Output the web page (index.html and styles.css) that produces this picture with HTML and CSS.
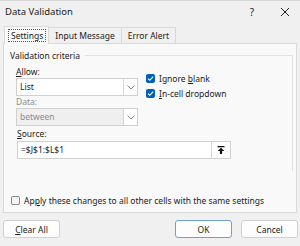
FILE: index.html
```html
<!DOCTYPE html>
<html lang="en">
<head>
    <meta charset="UTF-8">
    <title>Data Validation</title>
    <link rel="stylesheet" href="styles.css">
</head>
<body>

    <div class="dialog">
        <div class="titlebar">
            <span class="title">Data Validation</span>
            <span class="help">?</span>
            <svg class="close" width="10" height="10" viewBox="0 0 10 10">
                <path d="M1 1 L9 9 M9 1 L1 9" stroke="#222" stroke-width="1"/>
            </svg>
        </div>

        <div class="tabs">
            <div class="tab active"><span class="focus">Settings</span></div>
            <div class="tab">Input Message</div>
            <div class="tab">Error Alert</div>
        </div>

        <div class="panel">
            <div class="group">
                <div class="group-title">
                    <span>Validation criteria</span>
                    <span class="line"></span>
                </div>
                <div class="group-body">
                    <div class="row">
                        <div class="col-left">
                            <div class="label"><u>A</u>llow:</div>
                            <div class="select">
                                <span class="value">List</span>
                                <span class="arrow">
                                    <svg width="8" height="5" viewBox="0 0 8 5"><path d="M0.5 0.5 L4 4 L7.5 0.5" fill="none" stroke="#777" stroke-width="0.9"/></svg>
                                </span>
                            </div>
                            <div class="label disabled">Data:</div>
                            <div class="select disabled">
                                <span class="value">between</span>
                                <span class="arrow">
                                    <svg width="8" height="5" viewBox="0 0 8 5"><path d="M0.5 0.5 L4 4 L7.5 0.5" fill="none" stroke="#777" stroke-width="0.9"/></svg>
                                </span>
                            </div>
                        </div>
                        <div class="col-right">
                            <div class="check-row">
                                <span class="checkbox checked"><svg width="9" height="9" viewBox="0 0 9 9"><path d="M2 4.6 L3.8 6.3 L7.2 2.6" fill="none" stroke="#fff" stroke-width="1.1"/></svg></span>
                                <span>Ignore <u>b</u>lank</span>
                            </div>
                            <div class="check-row">
                                <span class="checkbox checked"><svg width="9" height="9" viewBox="0 0 9 9"><path d="M2 4.6 L3.8 6.3 L7.2 2.6" fill="none" stroke="#fff" stroke-width="1.1"/></svg></span>
                                <span><u>I</u>n-cell dropdown</span>
                            </div>
                        </div>
                    </div>

                    <div class="label source-label"><u>S</u>ource:</div>
                    <div class="source">
                        <span class="value">=$J$1:$L$1</span>
                        <span class="pick">
                            <svg width="8" height="8" viewBox="0 0 8 8">
                                <rect x="0.5" y="0" width="7" height="1.3" fill="#111"/>
                                <path d="M4 1.8 L7.4 5 L5.1 5 L5.1 8 L2.9 8 L2.9 5 L0.6 5 Z" fill="#111"/>
                            </svg>
                        </span>
                    </div>
                </div>
            </div>

            <div class="apply">
                <span class="checkbox"></span>
                <span>Ap<u>p</u>ly these changes to all other cells with the same settings</span>
            </div>
        </div>

        <div class="footer">
            <button class="btn"><u>C</u>lear All</button>
            <span class="spacer"></span>
            <button class="btn default">OK</button>
            <button class="btn">Cancel</button>
        </div>
    </div>

</body>
</html>
```

FILE: styles.css
```css
body {
    margin: 0;
    padding: 0;
    background-color: #f0f0f0;
    font-family: 'Noto Sans', 'Open Sans', sans-serif;
    font-size: 8.5px;
    color: #1b1b1b;
}
.dialog {
    width: 300px;
    height: 246px;
    border-top: 1px solid #d6d6d6;
    box-sizing: border-box;
}
.titlebar {
    height: 29px;
    display: flex;
    align-items: center;
    padding: 0 10px 0 5px;
    margin-top: -4px;
    font-size: 9.5px;
}
.title {
    flex: 1;
}
.help {
    margin-right: 26px;
    font-size: 10px;
}
.tabs {
    display: flex;
    margin-left: 4px;
    height: 17px;
    position: relative;
    z-index: 1;
}
.tab {
    height: 16px;
    margin-top: 1px;
    padding: 0 6px;
    border: 1px solid #d9d9d9;
    border-bottom: none;
    border-left: none;
    display: flex;
    align-items: center;
    line-height: 12px;
    box-sizing: border-box;
}
.tab.active {
    height: 18px;
    margin-top: 0;
    border-left: 1px solid #d9d9d9;
    background-color: #f9f9f9;
    padding: 0 2px 0 3px;
}
.focus {
    border: 1px dotted #555;
    padding: 0 2px;
    line-height: 11px;
}
.panel {
    margin: 0 3px;
    height: 170px;
    border: 1px solid #d9d9d9;
    background-color: #f9f9f9;
    box-sizing: border-box;
    display: flex;
    flex-direction: column;
}
.group {
    margin: 5px 3px 0 6px;
}
.group-title {
    display: flex;
    align-items: center;
    height: 12px;
}
.group-title .line {
    flex: 1;
    height: 1px;
    background-color: #e2e2e2;
    margin-left: 5px;
}
.group-body {
    border-right: 1px solid #e2e2e2;
    margin-top: -6px;
    padding: 6px 0 12px 6px;
}
.row {
    display: flex;
}
.col-left {
    width: 122px;
}
.col-right {
    margin: 12px 0 0 8px;
}
.label {
    height: 12px;
    line-height: 12px;
    margin-top: 5px;
}
.label.disabled {
    margin-top: 0;
    color: #8c8c8c;
}
.select {
    height: 18px;
    border: 1px solid #d0d0d0;
    background-color: #fff;
    display: flex;
    box-sizing: border-box;
}
.select .value,
.source .value {
    flex: 1;
    padding-left: 3px;
    line-height: 16px;
}
.select .arrow {
    width: 13px;
    border-left: 1px solid #d6d6d6;
    display: flex;
    align-items: center;
    justify-content: center;
}
.select.disabled {
    background-color: #efefef;
    color: #8c8c8c;
}
.select.disabled .arrow {
    background-color: #fff;
}
.check-row {
    height: 15px;
    display: flex;
    align-items: flex-start;
    line-height: 11px;
}
.check-row span:last-child {
    margin-left: 4px;
}
.checkbox {
    width: 9px;
    height: 9px;
    border: 1px solid #8a8a8a;
    border-radius: 2px;
    background-color: #f5f5f5;
    box-sizing: border-box;
    margin-top: 1px;
    display: inline-flex;
}
.checkbox.checked {
    border: none;
    background-color: #005fb8;
}
.source-label {
    margin-top: 2px;
    padding-left: 1px;
}
.source {
    margin: 1px 0 0 1px;
    width: 214px;
    height: 18px;
    border: 1px solid #d0d0d0;
    background-color: #fff;
    box-sizing: border-box;
    display: flex;
}
.source .pick {
    width: 18px;
    border-left: 1px solid #d6d6d6;
    display: flex;
    align-items: center;
    justify-content: center;
}
.apply {
    margin-top: auto;
    margin-bottom: 6px;
    padding-left: 7px;
    display: flex;
    align-items: flex-start;
    line-height: 11px;
}
.apply span:last-child {
    margin-left: 4px;
}
.footer {
    display: flex;
    padding: 7px 2px 0 3px;
    gap: 9px;
}
.spacer {
    flex: 1;
}
.btn {
    width: 57px;
    height: 18px;
    border: 1px solid #d0d0d0;
    border-radius: 3px;
    background-color: #fdfdfd;
    font-family: inherit;
    font-size: 8.5px;
    color: #1b1b1b;
    padding: 0;
}
.btn.default {
    border-color: #6f9fd6;
}
```
